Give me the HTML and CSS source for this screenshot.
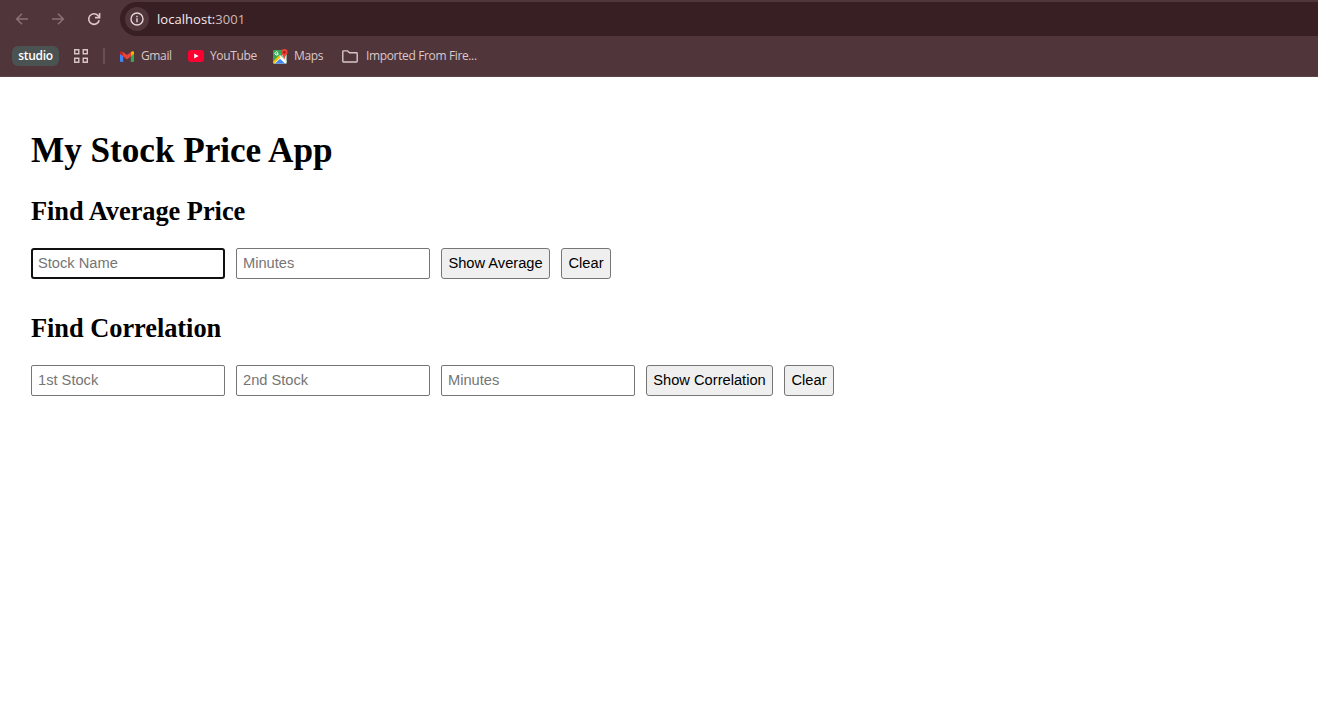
FILE: index.html
```html
<!DOCTYPE html>
<html lang="en">
<head>
<meta charset="utf-8">
<title>My Stock Price App</title>
<link rel="stylesheet" href="styles.css">
</head>
<body>
<header class="chrome">
  <div class="toolbar">
    <svg class="nav dim" viewBox="0 0 16 16"><path d="M14 8H3M8 2.7L2.7 8 8 13.3"/></svg>
    <svg class="nav dim" viewBox="0 0 16 16"><path d="M2 8h11M8 2.7L13.3 8 8 13.3"/></svg>
    <svg class="nav reload" viewBox="0 0 16 16"><path d="M13.2 9.2A5.3 5.3 0 1 1 12 4.5L13.4 6M13.6 2v4.6H9"/></svg>
    <div class="omnibox">
      <span class="info"><svg viewBox="0 0 14 14"><circle cx="7" cy="7" r="6"/><path d="M7 6.3v4M7 3.7v1.5"/></svg></span>
      <span class="url">localhost:<span class="port">3001</span></span>
    </div>
  </div>
  <nav class="bookmarks">
    <span class="group">studio</span>
    <svg class="apps" viewBox="0 0 14 14"><path d="M.7.700h4.100v4.100H.7zM9.200.700h4.100v4.100H9.200zM.7 9.200h4.100v4.100H.7zM9.200 9.200h4.100v4.100H9.200z"/></svg>
    <span class="divider"></span>
    <span class="bookmark gmail">
      <svg viewBox="0 0 14 11"><path fill="#4285f4" d="M0 2.500l3.200 2.400V11H1a1 1 0 0 1-1-1z"/><path fill="#34a853" d="M14 2.500l-3.200 2.400V11H13a1 1 0 0 0 1-1z"/><path fill="#fbbc04" d="M10.800 1.200l1-.8C12.700-.2 14 .3 14 1.500v1.400l-3.200 2.400z"/><path fill="#c5221f" d="M0 1.500C0 .3 1.300-.2 2.200.400l1 .8v4.100L0 2.900z"/><path fill="#ea4335" d="M2.700.800L7 4 11.200.800v4.500L7 8.500 2.700 5.100z"/></svg>
      <span>Gmail</span>
    </span>
    <span class="bookmark youtube">
      <svg viewBox="0 0 16 12"><rect width="16" height="12" rx="3" fill="#ff0033"/><path fill="#fff" d="M6.200 3.600L10.600 6 6.200 8.400z"/></svg>
      <span>YouTube</span>
    </span>
    <span class="bookmark maps">
      <svg viewBox="0 0 15 15"><rect y="1" width="13.500" height="13.500" rx="1" fill="#34a853"/><path fill="#fff" d="M0 13.500L7 6l6.500 6v2.500H1z"/><path fill="#fbbc04" d="M0 12.500l6-6 1.500 1.500L1.500 14.300H0z"/><path fill="#4285f4" d="M2 14.500l5-4.800 5 4.800z"/><path fill="#e8eaed" d="M8.500 6l5-2v9z"/><path fill="none" stroke="#fff" d="M4.900 3.500a1.600 1.600 0 1 0 .3 1.200H3.700"/><path fill="#ea4335" d="M11.300 0A3.300 3.300 0 0 0 8 3.300c0 2.300 2.600 3 3 6.700h.6c.4-3.700 3-4.400 3-6.700A3.300 3.300 0 0 0 11.300 0z"/><circle cx="11.300" cy="3.200" r="1.200" fill="#9b1c14"/></svg>
      <span>Maps</span>
    </span>
    <span class="bookmark folder">
      <svg viewBox="0 0 16 13"><path fill="none" stroke="#d8c6c9" stroke-width="1.400" stroke-linejoin="round" d="M.8 1.500Q.8.900 1.500.900H5.600L7.400 2.700H14.500q.7 0 .7.700V11.300q0 .7-.7.700H1.500q-.7 0-.7-.7z"/></svg>
      <span>Imported From Fire...</span>
    </span>
  </nav>
</header>
<main class="app">
  <h1>My Stock Price App</h1>
  <h2>Find Average Price</h2>
  <div class="row">
    <input class="active" type="text" placeholder="Stock Name">
    <input type="text" placeholder="Minutes">
    <button class="show-average">Show Average</button>
    <button class="clear">Clear</button>
  </div>
  <h2 class="second">Find Correlation</h2>
  <div class="row">
    <input type="text" placeholder="1st Stock">
    <input type="text" placeholder="2nd Stock">
    <input type="text" placeholder="Minutes">
    <button class="show-correlation">Show Correlation</button>
    <button class="clear">Clear</button>
  </div>
</main>
</body>
</html>
```
FILE: styles.css
```css
* { box-sizing: border-box; }
body { margin: 0; height: 702px; overflow: hidden; background: #fff; color: #000; font-family: "Liberation Serif", "Times New Roman", serif; }
svg { display: block; flex: none; }
.chrome { height: 77px; background: #50353a; border-bottom: 1px solid #5a4448; font-family: "Open Sans", "Noto Sans", sans-serif; white-space: nowrap; }
.toolbar { display: flex; align-items: center; height: 38px; padding-left: 14px; }
.nav { width: 16px; height: 16px; margin-right: 20px; fill: none; stroke: #dfc6cb; stroke-width: 1.6; }
.dim { stroke: #8a7074; }
.reload { margin-right: 18px; }
.omnibox { display: flex; align-items: center; flex: 1; height: 34px; padding-left: 5px; border-radius: 17px 0 0 17px; background: #381f23; }
.info { display: grid; place-items: center; width: 24px; height: 24px; border-radius: 50%; background: #50353a; }
.info svg { width: 14px; height: 14px; fill: none; stroke: #e6d5d8; stroke-width: 1.4; }
.url { margin-left: 8px; color: #f5e9eb; font-size: 13px; line-height: 18px; letter-spacing: 0.04px; }
.port { color: #cdbabd; }
.bookmarks { display: flex; align-items: center; height: 36px; padding-left: 12px; color: #dac8cb; font-size: 12px; line-height: 16px; letter-spacing: -0.36px; }
.group { width: 47px; height: 20px; border-radius: 6px; background: #4b5252; color: #fff; font-weight: 600; font-size: 12px; line-height: 19px; letter-spacing: -0.3px; text-align: center; }
.apps { width: 14px; height: 14px; margin-left: 15px; fill: none; stroke: #d8c6c9; stroke-width: 1.4; }
.divider { width: 2px; height: 16px; margin-left: 15px; background: #6a5054; }
.bookmark { display: flex; align-items: center; }
.gmail { width: 68px; margin-left: 15px; gap: 7px; }
.gmail svg { width: 14px; height: 11px; }
.youtube { width: 85px; gap: 6px; }
.youtube svg { width: 16px; height: 12px; }
.maps { width: 69px; gap: 6px; }
.maps svg { width: 15px; height: 15px; }
.folder { gap: 8px; }
.folder svg { width: 16px; height: 13px; }
.app { padding: 53px 31px 0; }
h1 { margin: 0; font-size: 35.2px; line-height: 41px; letter-spacing: -0.03px; }
h2 { margin: 25px 0 22px; font-size: 26.4px; line-height: 30px; letter-spacing: -0.04px; }
.second { margin-top: 34px; }
.row { display: flex; gap: 11px; }
input, button { height: 31px; margin: 0; font-family: "Liberation Sans", Arial, sans-serif; font-size: 14.667px; border: 1px solid #767676; border-radius: 2px; }
input { width: 194px; padding: 0 6px 2px; background: #fff; color: #000; outline: 0; }
input::placeholder { color: #757575; }
.active { padding: 0 5px 2px; border: 2px solid #101010; border-radius: 3px; }
button { padding: 0 0 1px; background: #efefef; color: #000; white-space: nowrap; border-radius: 3px; }
.show-average { width: 109px; }
.show-correlation { width: 127px; }
.clear { width: 50px; }
```
